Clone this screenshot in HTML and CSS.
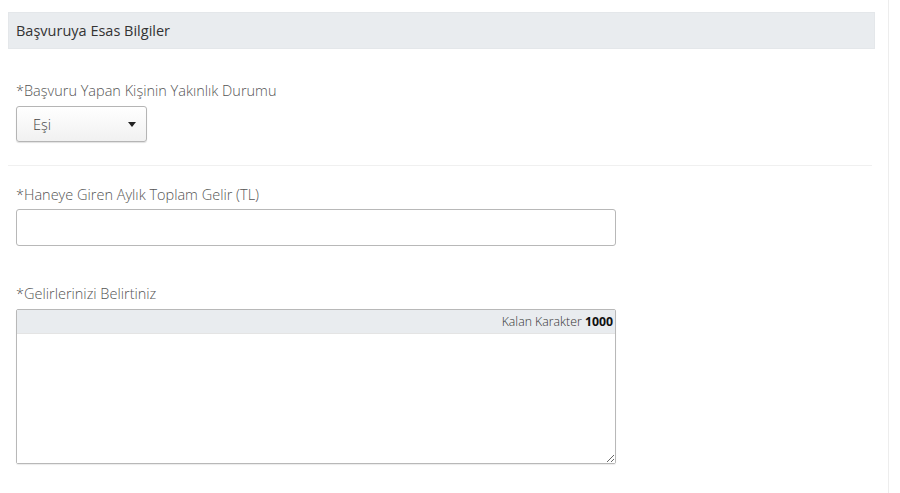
FILE: index.html
```html
<!DOCTYPE html>
<html lang="tr">
<head>
<meta charset="utf-8">
<title>Başvuruya Esas Bilgiler</title>
<link rel="stylesheet" href="styles.css">
</head>
<body>
<div class="page">
  <div class="panel">
    <div class="panel-head">Başvuruya Esas Bilgiler</div>

    <div class="field field-first">
      <label class="label">*Başvuru Yapan Kişinin Yakınlık Durumu</label>
      <div class="select">
        <span class="select-text">Eşi</span>
        <span class="caret"></span>
      </div>
    </div>

    <div class="sep"></div>

    <div class="field field-second">
      <label class="label">*Haneye Giren Aylık Toplam Gelir (TL)</label>
      <input class="input" type="text">
    </div>

    <div class="field field-third">
      <label class="label">*Gelirlerinizi Belirtiniz</label>
      <div class="textbox">
        <div class="counter">Kalan Karakter <b>1000</b></div>
        <textarea class="area"></textarea>
      </div>
    </div>
  </div>
</div>
</body>
</html>
```

FILE: styles.css
```css
html, body {
  margin: 0;
  padding: 0;
  background: #ffffff;
}
body {
  font-family: "Open Sans", "Noto Sans", sans-serif;
  color: #333;
}
.page {
  width: 889px;
  height: 493px;
  border-right: 1px solid #ededed;
  box-sizing: border-box;
}
.panel {
  padding: 12px 13px 0 8px;
}
.panel-head {
  height: 37px;
  box-sizing: border-box;
  background: #e9ecef;
  border: 1px solid #e4e7ea;
  padding-left: 7px;
  font-size: 14.5px;
  line-height: 36px;
  color: #333;
}
.field {
  padding-left: 8px;
  display: flex;
  flex-direction: column;
  align-items: flex-start;
}
.field-first { padding-top: 32px; }
.field-second { padding-top: 19px; }
.field-third { padding-top: 38px; }
.label {
  font-size: 14.5px;
  font-weight: 300;
  line-height: 20px;
  color: #555;
  margin-bottom: 5px;
}
.field-second .label { margin-bottom: 4px; }
.select {
  width: 131px;
  height: 36px;
  box-sizing: border-box;
  border: 1px solid #b5b5b5;
  border-radius: 3px;
  background: linear-gradient(#ffffff, #f1f1f1);
  box-shadow: 0 1px 1px rgba(0,0,0,0.12);
  display: flex;
  align-items: center;
  justify-content: space-between;
  padding: 0 10px 0 16px;
}
.select-text {
  font-size: 14.5px;
  font-weight: 300;
  color: #444;
}
.caret {
  width: 0;
  height: 0;
  border-left: 4px solid transparent;
  border-right: 4px solid transparent;
  border-top: 5px solid #222;
}
.sep {
  height: 1px;
  background: #f0f0f0;
  margin-top: 23px;
  margin-right: 3px;
}
.input {
  width: 600px;
  height: 37px;
  box-sizing: border-box;
  border: 1px solid #b8b8b8;
  border-radius: 3px;
  margin: 0;
  padding: 0 8px;
  font-family: inherit;
  font-size: 14px;
  outline: none;
}
.textbox {
  width: 600px;
  height: 155px;
  box-sizing: border-box;
  border: 1px solid #b8b8b8;
  border-radius: 2px;
  display: flex;
  flex-direction: column;
  box-shadow: 0 1px 1px rgba(0,0,0,0.08);
}
.counter {
  height: 23px;
  background: #e9ecef;
  border-bottom: 1px solid #e4e4e4;
  text-align: right;
  font-size: 12.3px;
  font-weight: 300;
  line-height: 24px;
  padding-right: 2px;
  color: #333;
}
.counter b {
  font-weight: 700;
  color: #111;
}
.area {
  flex: 1;
  border: none;
  margin: 0;
  padding: 4px 8px;
  font-family: inherit;
  font-size: 13px;
  resize: vertical;
  outline: none;
  background: #fff;
}
```
